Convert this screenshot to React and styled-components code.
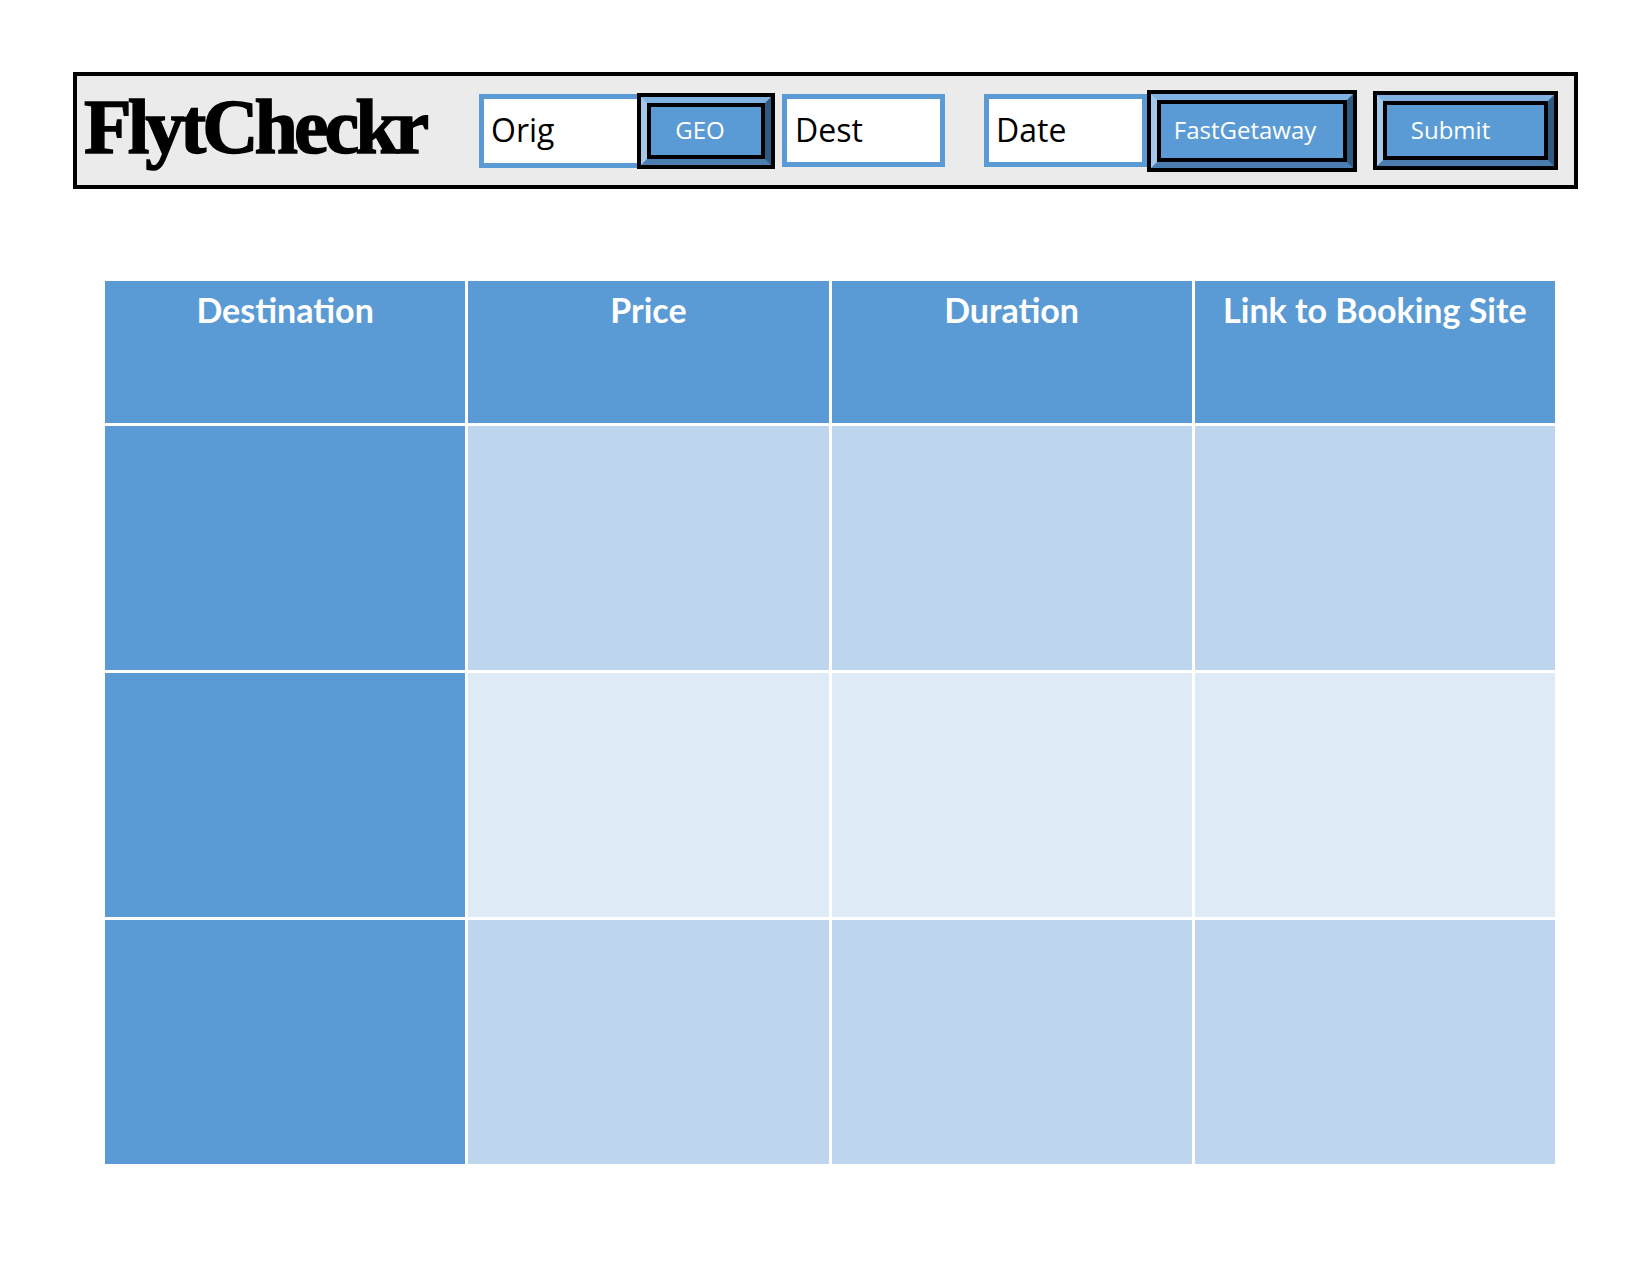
import styled, { createGlobalStyle } from 'styled-components';

const GlobalStyle = createGlobalStyle`
  html, body {
    margin: 0;
    padding: 0;
    background: #ffffff;
  }
  body {
    font-family: "Open Sans", "Liberation Sans", sans-serif;
  }
`;

const Page = styled.div`
  width: 1650px;
  height: 1275px;
  box-sizing: border-box;
  padding: 72px 0 0 73px;
`;

const Header = styled.header`
  box-sizing: border-box;
  width: 1505px;
  height: 117px;
  border: 4px solid #000;
  background: #ebebeb;
  display: flex;
  align-items: center;
  padding-left: 7px;
`;

const Logo = styled.h1`
  box-sizing: border-box;
  width: 395px;
  margin: 0 0 8px;
  font-family: "Liberation Serif", "DejaVu Serif", serif;
  font-weight: 700;
  font-size: 78px;
  line-height: 1;
  letter-spacing: -4px;
  color: #000;
  -webkit-text-stroke: 1.5px #000;
`;

const Field = styled.div`
  box-sizing: border-box;
  flex: 0 0 auto;
  width: 163px;
  height: ${(p) => p.$h || 74}px;
  margin-left: ${(p) => p.$gap || 0}px;
  border: 5px solid #5b9bd5;
  background: #fff;
  display: flex;
  align-items: center;
  padding: 0 0 2px ${(p) => p.$pad || 7}px;
  font-size: 32px;
  color: #000;
`;

const Button = styled.div`
  box-sizing: border-box;
  flex: 0 0 auto;
  width: ${(p) => p.$w}px;
  height: ${(p) => p.$h}px;
  margin-left: ${(p) => p.$gap || 0}px;
  border: 4px solid #000;
  display: flex;
`;

const Bevel = styled.div`
  box-sizing: border-box;
  flex: 1;
  display: flex;
  border-style: solid;
  border-width: 6px;
  border-color: #7fb1e2 #2f5a82 #4a7eb0 #a4c7ea;
`;

const Face = styled.div`
  box-sizing: border-box;
  flex: 1;
  border: 4px solid #000;
  background: #5b9bd5;
  color: #fff;
  font-size: 24px;
  display: flex;
  align-items: center;
  justify-content: center;
  padding: 0 ${(p) => p.$shift || 0}px 2px 0;
`;

const Table = styled.div`
  margin: 92px 0 0 32px;
  width: 1450px;
  display: grid;
  grid-template-columns: repeat(4, 1fr);
  grid-template-rows: 142px repeat(3, 244px);
  gap: 3px;
  background: #fff;
`;

const tones = {
  accent: '#5b9bd5',
  band: '#bdd6ee',
  light: '#deeaf6',
};

const Cell = styled.div`
  background: ${(p) => tones[p.$tone]};
`;

const HeadCell = styled.div`
  background: #5b9bd5;
  color: #fff;
  font-family: "Lato", "Open Sans", sans-serif;
  font-weight: 700;
  font-size: 34px;
  text-align: center;
  padding-top: 9px;
  line-height: 1.2;
`;

const columns = ['Destination', 'Price', 'Duration', 'Link to Booking Site'];
const rows = ['band', 'light', 'band'];

const BevelButton = ({ label, w, h, gap, shift }) => (
  <Button $w={w} $h={h} $gap={gap}>
    <Bevel>
      <Face $shift={shift}>{label}</Face>
    </Bevel>
  </Button>
);

export default function App() {
  return (
    <Page>
      <GlobalStyle />
      <Header>
        <Logo>FlytCheckr</Logo>
        <Field $gap={0}>Orig</Field>
        <BevelButton label="GEO" w={138} h={76} gap={-5} shift={12} />
        <Field $gap={7} $h={73} $pad={8}>Dest</Field>
        <Field $gap={39} $h={73} $pad={7}>Date</Field>
        <BevelButton label="FastGetaway" w={210} h={82} gap={0} shift={14} />
        <BevelButton label="Submit" w={185} h={79} gap={16} shift={30} />
      </Header>
      <Table>
        {columns.map((c) => (
          <HeadCell key={c}>{c}</HeadCell>
        ))}
        {rows.map((tone, r) =>
          columns.map((c, i) => (
            <Cell key={`${r}-${c}`} $tone={i === 0 ? 'accent' : tone} />
          ))
        )}
      </Table>
    </Page>
  );
}
